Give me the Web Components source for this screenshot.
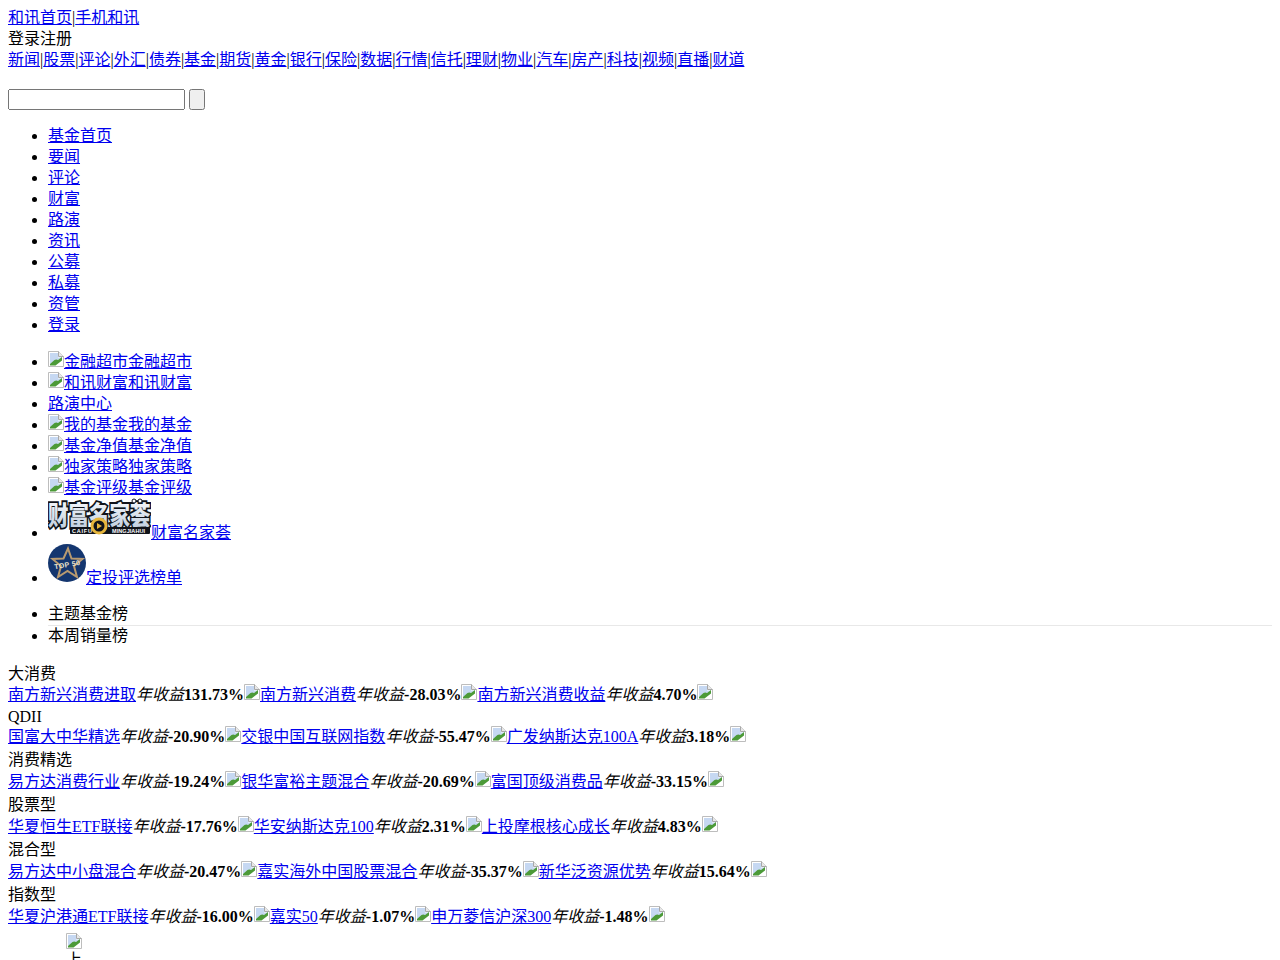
<!DOCTYPE html>
<html lang="zh">
<head>
<meta charset="utf-8">
<title>和讯基金</title>
<style>
  body { font-family: "Liberation Serif", "Noto Sans CJK SC", serif; line-height: 21px; margin: 7px 8px 8px; }
</style>
</head>
<body>
<site-top></site-top>
<search-box></search-box>
<fund-nav></fund-nav>
<quick-links></quick-links>
<rank-tabs></rank-tabs>
<rank-group style="--name-h:21px;--row-gap:0" name="大消费" rows="南方新兴消费进取|131.73%,南方新兴消费|-28.03%,南方新兴消费收益|4.70%"></rank-group>
<rank-group style="--name-gap:-2px" name="QDII" rows="国富大中华精选|-20.90%,交银中国互联网指数|-55.47%,广发纳斯达克100A|3.18%"></rank-group>
<rank-group name="消费精选" rows="易方达消费行业|-19.24%,银华富裕主题混合|-20.69%,富国顶级消费品|-33.15%"></rank-group>
<rank-group name="股票型" rows="华夏恒生ETF联接|-17.76%,华安纳斯达克100|2.31%,上投摩根核心成长|4.83%"></rank-group>
<rank-group name="混合型" rows="易方达中小盘混合|-20.47%,嘉实海外中国股票混合|-35.37%,新华泛资源优势|15.64%"></rank-group>
<rank-group name="指数型" rows="华夏沪港通ETF联接|-16.00%,嘉实50|-1.07%,申万菱信沪深300|-1.48%"></rank-group>
<next-slot></next-slot>

<script>
// broken picture icon, same one everywhere
const brokenIcon = `<svg width="16" height="16" viewBox="0 0 16 16">
  <path d="M.5.5h10l5 5v10h-15z" fill="#fff" stroke="#bdbdbd"/>
  <path d="M10.500.5v5h5" fill="#e8e8e8" stroke="#a8a8a8"/>
  <path d="M2 2h8v4.500h4v.5l-12 6z" fill="#c6d8f2"/>
  <path d="M2 14.500v-1.500l4.500-4c1.500-1 2.500-.5 3.500 0l4-3v3.500l-6.500 5z" fill="#4c9a38"/>
</svg>`;

const linkList = (names) => names.map((n) => `<a href="#">${n}</a>`).join("|");

class SiteTop extends HTMLElement {
  constructor() {
    super();
    const names = "新闻 股票 评论 外汇 债券 基金 期货 黄金 银行 保险 数据 行情 信托 理财 物业 汽车 房产 科技 视频 直播 财道".split(" ");
    this.attachShadow({ mode: "open" }).innerHTML = `
      <style>:host { display: block; }</style>
      <div>${linkList(["和讯首页", "手机和讯"])}</div>
      <div>登录注册</div>
      <div>${linkList(names)}</div>`;
  }
}

class SearchBox extends HTMLElement {
  constructor() {
    super();
    this.attachShadow({ mode: "open" }).innerHTML = `
      <style>
        :host { display: block; margin: 19px 0 0; }
        form { margin: 0; display: flex; gap: 4px; align-items: center; height: 21px; }
        input[type=text] { box-sizing: border-box; width: 177px; height: 21px; margin: 0; }
        input[type=submit] { box-sizing: border-box; width: 16px; height: 21px; margin: 0; padding: 0; }
      </style>
      <form onsubmit="return false"><input type="text"><input type="submit" value=""></form>`;
  }
}

class FundNav extends HTMLElement {
  constructor() {
    super();
    const items = "基金首页 要闻 评论 财富 路演 资讯 公募 私募 资管 登录".split(" ");
    this.attachShadow({ mode: "open" }).innerHTML = `
      <style>:host { display: block; } ul { margin: 15px 0 16px; }</style>
      <ul>${items.map((n) => `<li><a href="#">${n}</a></li>`).join("")}</ul>`;
  }
}

class QuickLinks extends HTMLElement {
  constructor() {
    super();
    const pic = (n) => `<li>${brokenIcon}<a href="#">${n}${n}</a></li>`;
    this.attachShadow({ mode: "open" }).innerHTML = `
      <style>
        :host { display: block; }
        ul { margin: 16px 0 15px; }
        .logo { vertical-align: 3px; }
        .star { vertical-align: 1px; }
        .star-item { margin-top: 1px; }
        .logo text { font-family: "Noto Sans CJK SC", sans-serif; }
        .logo .small, .star text { font-family: "Liberation Sans", sans-serif; font-weight: 700; }
      </style>
      <ul>
        ${pic("金融超市")}
        ${pic("和讯财富")}
        <li><a href="#">路演中心</a></li>
        ${pic("我的基金")}
        ${pic("基金净值")}
        ${pic("独家策略")}
        ${pic("基金评级")}
        <li><svg class="logo" width="103" height="37" viewBox="0 0 103 37">
          <defs><linearGradient id="lg" x1="0" y1="0" x2="0" y2="1"><stop offset="0" stop-color="#fff"/><stop offset="1" stop-color="#b9c9dc"/></linearGradient></defs>
          <g transform="translate(0 27) scale(1 1.25)">
            <text font-size="20.500" font-weight="900" fill="url(#lg)" stroke="#10131a" stroke-width="3" paint-order="stroke">财富名家荟</text>
          </g>
          <rect x="22" y="29" width="80" height="7" rx="1" fill="#10131a"/>
          <text class="small" x="24" y="35" font-size="5.500" fill="#fff" textLength="20">CAIFU</text>
          <text class="small" x="64" y="35" font-size="5.500" fill="#fff" textLength="33">MINGJIAHUI</text>
          <circle cx="51" cy="28" r="7" fill="#10131a" stroke="#e6b63c" stroke-width="3"/>
          <path d="M49 25l5 3-5 3z" fill="#e6b63c"/>
          <circle cx="86" cy="3" r="2" fill="#fff" stroke="#10131a"/>
          <circle cx="92" cy="3" r="2" fill="#fff" stroke="#10131a"/>
        </svg><a href="#">财富名家荟</a></li>
        <li class="star-item"><svg class="star" width="38" height="38" viewBox="0 0 38 38">
          <circle cx="19" cy="19" r="19" fill="#14366f"/>
          <path d="M20 4.500l3.500 10 11 .5-8.500 7 3 11-9.500-6-9.500 6 3-11-8.500-7 11-.5z" fill="none" stroke="#b89a70" stroke-width="2"/>
          <text x="6" y="23" font-size="7" fill="#eee6d2" textLength="26" transform="rotate(-10 19 20)">TOP 50</text>
        </svg><a href="#">定投评选榜单</a></li>
      </ul>`;
  }
}

class RankTabs extends HTMLElement {
  constructor() {
    super();
    this.attachShadow({ mode: "open" }).innerHTML = `
      <style>
        :host { display: block; }
        ul { margin: 0 0 17px; }
        li:first-child { border-bottom: 1px solid #e8e8e8; padding-bottom: 1px; }
        li:last-child { margin-top: -1px; }
      </style>
      <ul><li>主题基金榜</li><li>本周销量榜</li></ul>`;
  }
}

class RankGroup extends HTMLElement {
  constructor() {
    super();
    const rows = this.getAttribute("rows").split(",").map((r) => {
      const [fund, rate] = r.split("|");
      return `<a href="#">${fund}</a><i>年收益</i><b>${rate}</b>${brokenIcon}`;
    });
    this.attachShadow({ mode: "open" }).innerHTML = `
      <style>
        :host { display: block; }
        .name { line-height: var(--name-h, 22px); margin-bottom: var(--name-gap, 0); }
        .row { line-height: 22px; margin-bottom: var(--row-gap, 1px); }
      </style>
      <div class="name">${this.getAttribute("name")}</div>
      <div class="row">${rows.join("")}</div>`;
  }
}

class NextSlot extends HTMLElement {
  constructor() {
    super();
    this.attachShadow({ mode: "open" }).innerHTML = `
      <style>
        :host { display: block; padding: 4px 0 0 58px; }
        div { width: 16px; }
        svg { display: block; }
      </style>
      <div>${brokenIcon}上</div>`;
  }
}

customElements.define("site-top", SiteTop);
customElements.define("search-box", SearchBox);
customElements.define("fund-nav", FundNav);
customElements.define("quick-links", QuickLinks);
customElements.define("rank-tabs", RankTabs);
customElements.define("rank-group", RankGroup);
customElements.define("next-slot", NextSlot);
</script>
</body>
</html>
